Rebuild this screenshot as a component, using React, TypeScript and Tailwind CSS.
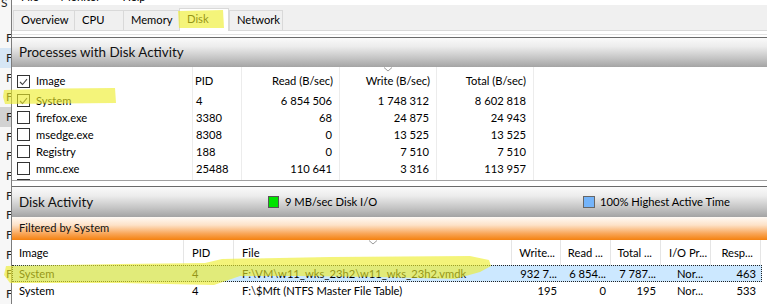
import React from 'react';

interface TopRow {
  name: string;
  pid: string;
  read: string;
  write: string;
  total: string;
  checked?: boolean;
}

const topRows: TopRow[] = [
  { name: 'System', pid: '4', read: '6 854 506', write: '1 748 312', total: '8 602 818', checked: true },
  { name: 'firefox.exe', pid: '3380', read: '68', write: '24 875', total: '24 943' },
  { name: 'msedge.exe', pid: '8308', read: '0', write: '13 525', total: '13 525' },
  { name: 'Registry', pid: '188', read: '0', write: '7 510', total: '7 510' },
  { name: 'mmc.exe', pid: '25488', read: '110 641', write: '3 316', total: '113 957' },
  { name: '', pid: '', read: '', write: '', total: '' },
];

const fileRows = [
  { image: 'System', pid: '4', file: 'F:\\VM\\w11_wks_23h2\\w11_wks_23h2.vmdk', write: '932 7...', read: '6 854...', total: '7 787...', prio: 'Nor...', resp: '463', selected: true },
  { image: 'System', pid: '4', file: 'F:\\$Mft (NTFS Master File Table)', write: '195', read: '0', total: '195', prio: 'Nor...', resp: '533' },
];

const topCols = 'grid grid-cols-[181px_49px_98px_97px_97px_1fr]';
const fileCols = 'grid grid-cols-[172px_50px_278px_49px_50px_50px_50px_50px_1fr]';

const CheckBox = ({ checked }: { checked?: boolean }) => (
  <span className="flex h-[13px] w-[13px] shrink-0 items-center justify-center border border-[#333] bg-white">
    {checked && (
      <svg width="9" height="8" viewBox="0 0 9 8">
        <path d="M1 4 L3.5 6.5 L8 1.2" stroke="#444" fill="none" strokeWidth="1.1" />
      </svg>
    )}
  </span>
);

const SortArrow = () => (
  <svg className="absolute left-1/2 top-0 -translate-x-1/2" width="9" height="5" viewBox="0 0 9 5">
    <path d="M0.5 0.5 L4.5 4 L8.5 0.5" stroke="#9a9a9a" fill="none" strokeWidth="1" />
  </svg>
);

// window sitting behind, only a sliver of it shows
const BackWindow = () => {
  const rows = Array.from({ length: 14 });
  return (
    <div className="flex w-[11px] shrink-0 flex-col overflow-hidden bg-[#f7f7f7] text-[12px] leading-[14px] text-[#222]">
      <div className="mt-[-4px] h-[40px] pl-[1px]">S</div>
      {rows.map((_, i) => (
        <div
          key={i}
          className={`flex h-[19.7px] shrink-0 items-center pl-[6px] ${i === 1 ? 'bg-[#d6e6f5]' : ''} ${i === 4 ? 'bg-[#d2d2d2]' : ''}`}
        >
          F
        </div>
      ))}
    </div>
  );
};

const tabs = [
  { label: 'Overview', w: 'w-[61px]' },
  { label: 'CPU', w: 'w-[49px]' },
  { label: 'Memory', w: 'w-[56px]' },
  { label: 'Disk', w: 'w-[50px]', active: true },
  { label: 'Network', w: 'w-[54px]' },
];

const grayHeader = 'bg-[linear-gradient(to_bottom,#fafafa_0%,#ececec_30%,#c4c4c4_70%,#a4a4a4_100%)]';

const Highlights = () => (
  <svg className="pointer-events-none absolute left-0 top-0" width="767" height="304" viewBox="0 0 767 304">
    <g fill="rgba(238,238,40,0.62)">
      <path d="M178 11 L223 10 L224 28 L179 28 Z" />
      <path d="M4 90 L60 88.5 L115 88 L116 103 L60 103.5 L5 104 L3 97 Z" />
      <path d="M6 266 L120 264 L205 263 L222 259 L330 257 L470 256 L489 260 L491 266 L480 272 L455 279 L380 277 L300 276 L240 276 L214 285 L120 283 L10 283 L4 275 Z" />
    </g>
  </svg>
);

export default function App() {
  return (
    <div className="relative flex h-[304px] w-[767px] overflow-hidden whitespace-nowrap bg-white font-['Lato',sans-serif] text-[11.2px] text-black">
      <BackWindow />
      <div className="w-px shrink-0 bg-[#7c7c7c]" />

      <div className="flex min-w-0 flex-1 flex-col">
        {/* menu bar, mostly scrolled off */}
        <div className="h-[5px] shrink-0 overflow-hidden bg-white">
          <div className="mt-[-10px] flex gap-[22px] pl-[9px] leading-[14px]">
            <span>File</span>
            <span>Monitor</span>
            <span>Help</span>
          </div>
        </div>

        {/* tabs */}
        <div className="flex h-[26px] shrink-0 items-end border-b border-[#d9d9d9] bg-[#f0f0f0] pl-[1px]">
          {tabs.map((t, i) => (
            <div
              key={t.label}
              className={`flex ${t.w} items-center pl-[7px] ${
                t.active
                  ? 'mb-[-1px] h-[23px] border border-b-0 border-[#d9d9d9] bg-white pb-[2px]'
                  : `h-[20px] border-l border-t border-[#d9d9d9] ${i === tabs.length - 1 ? 'border-r' : ''}`
              }`}
            >
              {t.label}
            </div>
          ))}
        </div>
        <div className="flex h-[6px] shrink-0 flex-col justify-center bg-white">
          <div className="h-px bg-[#e3e3e3]" />
        </div>

        {/* processes panel */}
        <div className="flex shrink-0 flex-col border-t border-[#6a6a6a]">
          <div className={`flex h-[29px] items-center pl-[7px] text-[13.4px] text-[#111] ${grayHeader}`}>
            Processes with Disk Activity
          </div>
          <div className="h-[114px] overflow-hidden border-b border-[#a0a0a0]">
            <div className={`${topCols} h-[25px]`}>
              <div className="flex items-start gap-[6px] border-r border-[#ececec] pl-[5px] pt-[8px]">
                <CheckBox checked />
                <span className="mt-[-1px] leading-[14px]">Image</span>
              </div>
              <div className="border-r border-[#ececec] pl-[2px] pt-[7px] leading-[14px]">PID</div>
              <div className="border-r border-[#ececec] pr-[6px] pt-[7px] text-right leading-[14px]">Read (B/sec)</div>
              <div className="relative border-r border-[#ececec] pr-[6px] pt-[7px] text-right leading-[14px]">
                <SortArrow />
                Write (B/sec)
              </div>
              <div className="border-r border-[#ececec] pr-[7px] pt-[7px] text-right leading-[14px]">Total (B/sec)</div>
              <div />
            </div>
            {topRows.map((r, i) => (
              <div key={i} className={`${topCols} h-[17px] leading-[17px]`}>
                <div className="flex items-center gap-[6px] border-r border-[#ececec] pl-[5px]">
                  <CheckBox checked={r.checked} />
                  <span>{r.name}</span>
                </div>
                <div className="border-r border-[#ececec] pl-[3px]">{r.pid}</div>
                <div className="border-r border-[#ececec] pr-[7px] text-right">{r.read}</div>
                <div className="border-r border-[#ececec] pr-[7px] text-right">{r.write}</div>
                <div className="border-r border-[#ececec] pr-[7px] text-right">{r.total}</div>
                <div />
              </div>
            ))}
          </div>
        </div>

        <div className="h-[5px] shrink-0 bg-white" />

        {/* disk activity panel */}
        <div className="flex min-h-0 flex-1 flex-col border-t border-[#6a6a6a]">
          <div className={`flex h-[30px] shrink-0 items-center ${grayHeader}`}>
            <div className="w-[256px] pl-[7px] text-[13.4px] text-[#111]">Disk Activity</div>
            <div className="flex w-[315px] items-center gap-[6px]">
              <span className="h-[12px] w-[11px] border border-[#555] bg-[#00e400]" />
              <span>9 MB/sec Disk I/O</span>
            </div>
            <div className="flex items-center gap-[5px]">
              <span className="h-[12px] w-[12px] border border-[#666] bg-[#74b4fa]" />
              <span>100% Highest Active Time</span>
            </div>
          </div>
          <div className="flex h-[23px] shrink-0 items-center bg-[linear-gradient(to_bottom,#fffaf5_0%,#fde2c8_35%,#f9a658_72%,#f4810f_100%)] pl-[7px] text-[#111]">
            Filtered by System
          </div>

          <div className={`${fileCols} h-[25px] shrink-0 leading-[14px]`}>
            <div className="border-r border-[#e5e5e5] pl-[7px] pt-[6px]">Image</div>
            <div className="border-r border-[#e5e5e5] pl-[8px] pt-[6px]">PID</div>
            <div className="relative border-r border-[#e5e5e5] pl-[8px] pt-[6px]">
              <SortArrow />
              File
            </div>
            <div className="border-r border-[#e5e5e5] pr-[5px] pt-[6px] text-right">Write...</div>
            <div className="border-r border-[#e5e5e5] pr-[7px] pt-[6px] text-right">Read ...</div>
            <div className="border-r border-[#e5e5e5] pr-[8px] pt-[6px] text-right">Total ...</div>
            <div className="border-r border-[#e5e5e5] pl-[8px] pt-[6px]">I/O Pr...</div>
            <div className="border-r border-[#e5e5e5] pr-[7px] pt-[6px] text-right">Resp...</div>
            <div />
          </div>

          {fileRows.map((r, i) => (
            <div key={i} className="h-[17px] shrink-0 pl-[2px] pr-[5px] leading-[15px]">
              <div
                className={`${fileCols} ml-[-2px] h-[17px] border border-dotted ${
                  r.selected ? 'border-[#222] bg-[#cce8ff]' : 'border-transparent'
                }`}
              >
                <div className="pl-[6px]">{r.image}</div>
                <div className="pl-[7px]">{r.pid}</div>
                <div className="truncate pl-[7px]">{r.file}</div>
                <div className="pr-[5px] text-right">{r.write}</div>
                <div className="pr-[6px] text-right">{r.read}</div>
                <div className="pr-[6px] text-right">{r.total}</div>
                <div className="pl-[15px]">{r.prio}</div>
                <div className="pr-[6px] text-right">{r.resp}</div>
                <div />
              </div>
            </div>
          ))}
        </div>
      </div>

      <Highlights />
    </div>
  );
}
